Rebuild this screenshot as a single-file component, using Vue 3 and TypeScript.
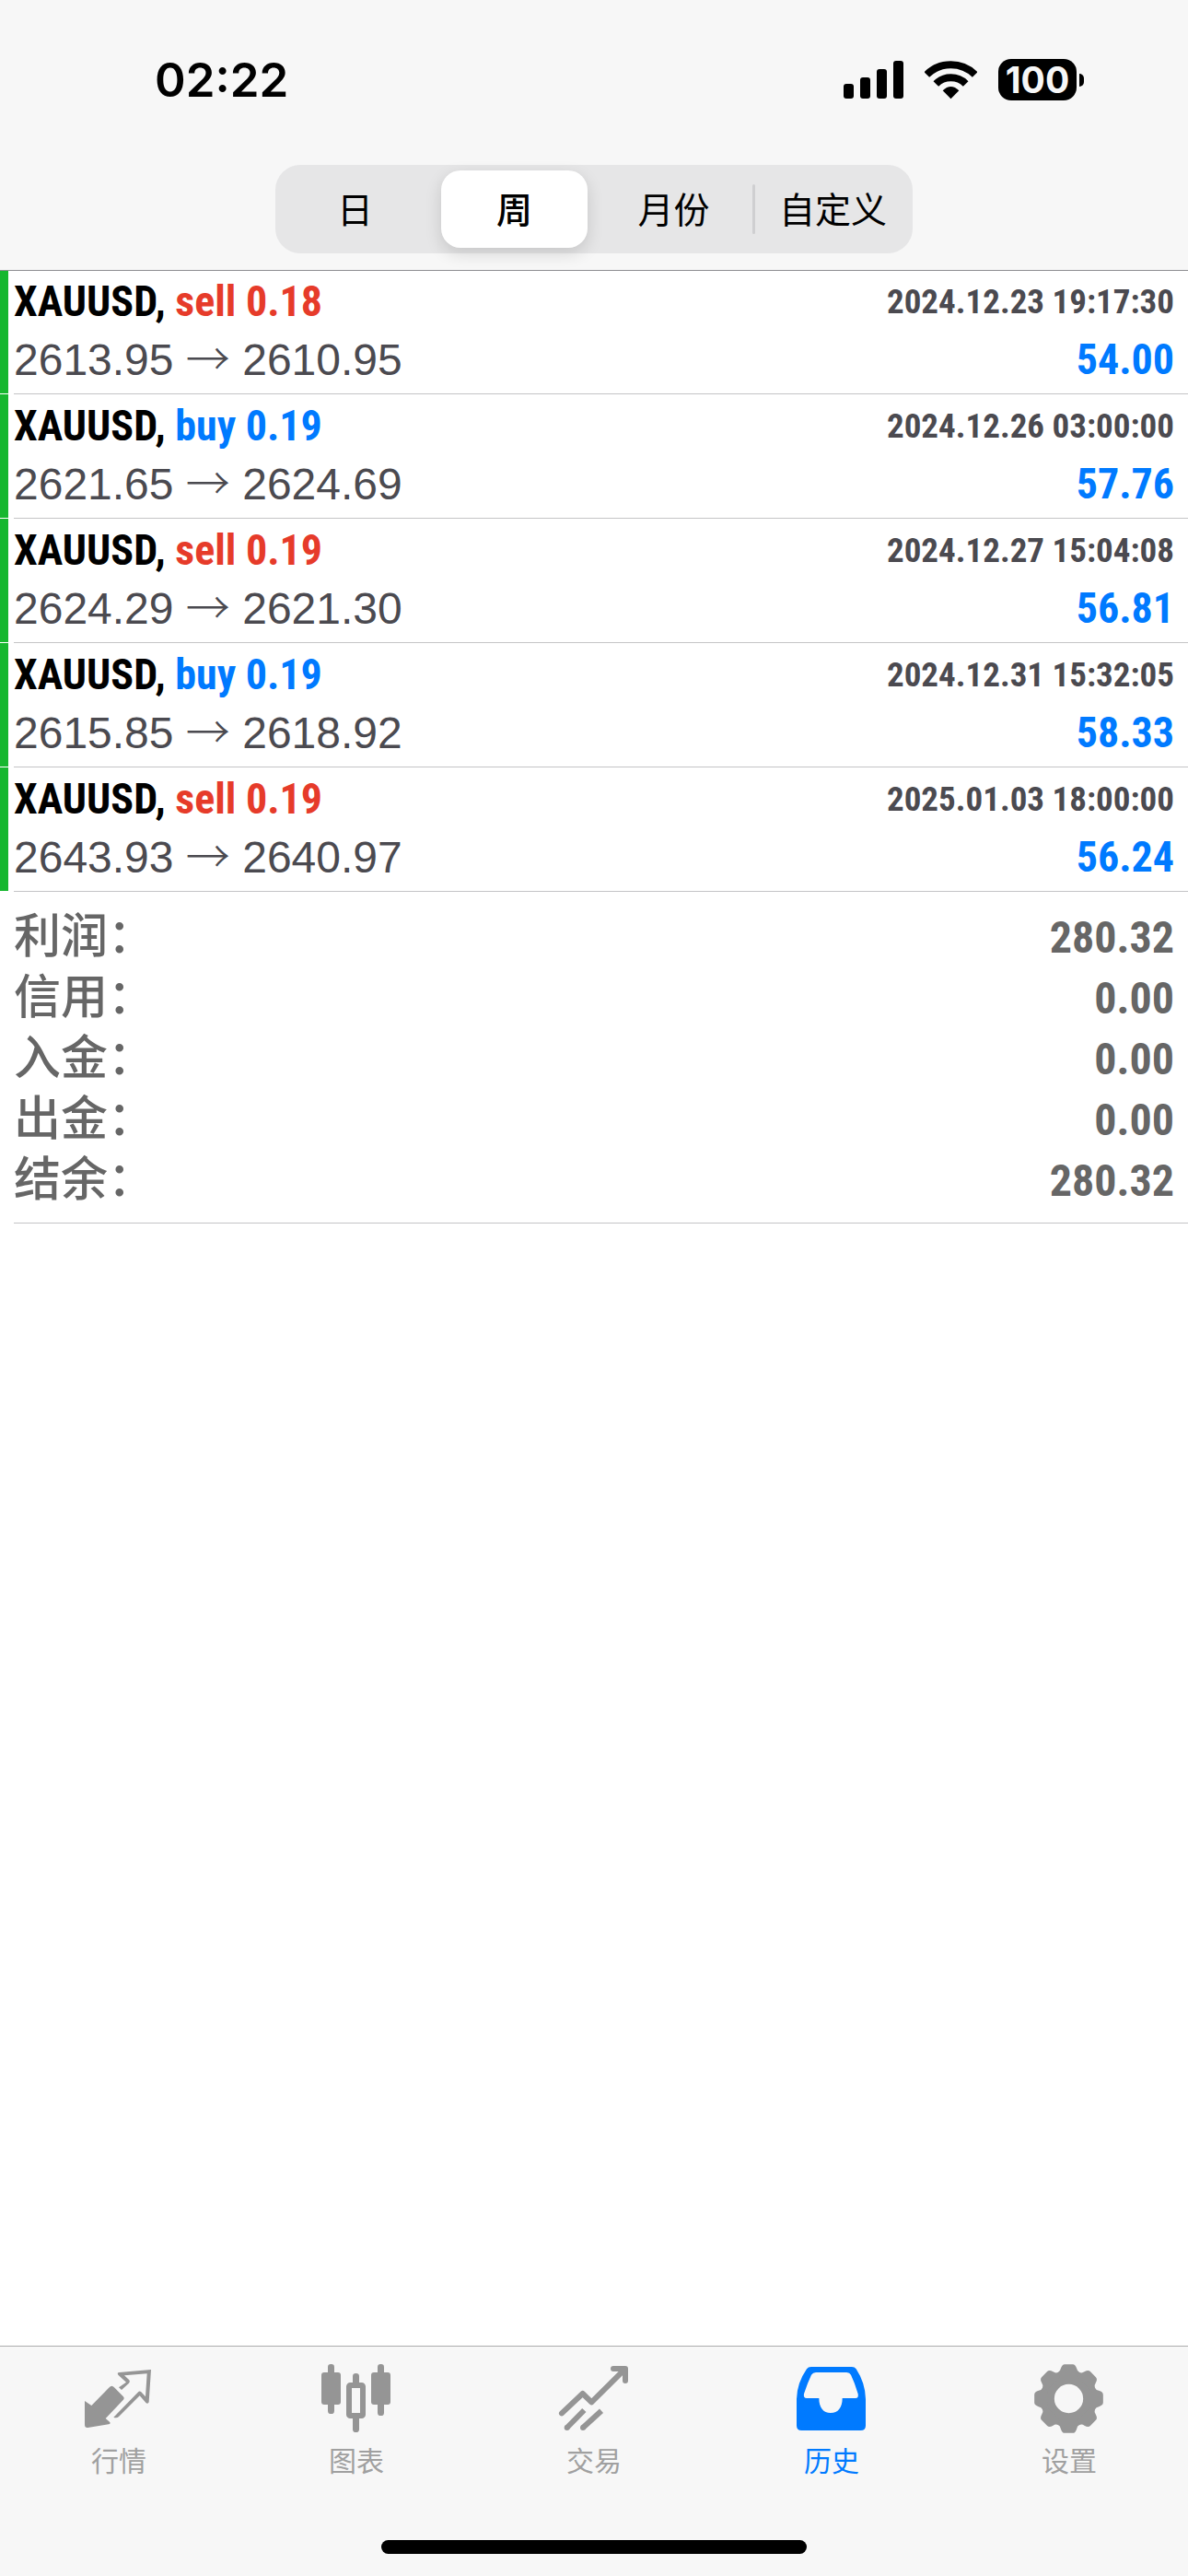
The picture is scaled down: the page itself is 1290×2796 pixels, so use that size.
<script setup lang="ts">
import { ref } from 'vue'

interface Deal {
  symbol: string
  side: 'buy' | 'sell'
  volume: string
  open: string
  close: string
  time: string
  profit: string
}

const periods = ['日', '周', '月份', '自定义']
const period = ref('周')

const deals: Deal[] = [
  { symbol: 'XAUUSD', side: 'sell', volume: '0.18', open: '2613.95', close: '2610.95', time: '2024.12.23 19:17:30', profit: '54.00' },
  { symbol: 'XAUUSD', side: 'buy', volume: '0.19', open: '2621.65', close: '2624.69', time: '2024.12.26 03:00:00', profit: '57.76' },
  { symbol: 'XAUUSD', side: 'sell', volume: '0.19', open: '2624.29', close: '2621.30', time: '2024.12.27 15:04:08', profit: '56.81' },
  { symbol: 'XAUUSD', side: 'buy', volume: '0.19', open: '2615.85', close: '2618.92', time: '2024.12.31 15:32:05', profit: '58.33' },
  { symbol: 'XAUUSD', side: 'sell', volume: '0.19', open: '2643.93', close: '2640.97', time: '2025.01.03 18:00:00', profit: '56.24' },
]

const totals = [
  { label: '利润：', value: '280.32' },
  { label: '信用：', value: '0.00' },
  { label: '入金：', value: '0.00' },
  { label: '出金：', value: '0.00' },
  { label: '结余：', value: '280.32' },
]

const gearAngles = [0, 45, 90, 135, 180, 225, 270, 315]
</script>

<template>
  <div class="app">
    <header class="header">
      <div class="status">
        <time class="clock">02:22</time>
        <div class="indicators">
          <svg class="signal" viewBox="108 72 195 135" aria-hidden="true">
            <rect x="108" y="153" width="33" height="48" rx="9" />
            <rect x="162" y="132" width="33" height="69" rx="9" />
            <rect x="216" y="105" width="33" height="96" rx="9" />
            <rect x="270" y="78" width="33" height="123" rx="9" />
          </svg>
          <svg class="wifi" viewBox="372 72 171 135" aria-hidden="true">
            <path d="M379 123A112 112 0 0 1 536 123M409 153A69 69 0 0 1 506 153" fill="none" stroke="#000" stroke-width="24" />
            <path d="M457.500 202L431 175Q457.500 149 484 175Z" />
          </svg>
          <div class="battery"><span class="level">100</span><i class="nub"></i></div>
        </div>
      </div>
      <div class="segments" role="group">
        <button
          v-for="p in periods"
          :key="p"
          type="button"
          class="segment"
          :class="{ active: p === period }"
          :aria-pressed="p === period"
          @click="period = p"
        >{{ p }}</button>
      </div>
    </header>

    <main class="content">
      <ul class="deals">
        <li v-for="d in deals" :key="d.time" class="deal">
          <div class="line">
            <span class="title">{{ d.symbol }}, <span :class="d.side">{{ d.side }} {{ d.volume }}</span></span>
            <time class="time">{{ d.time }}</time>
          </div>
          <div class="line">
            <span class="prices">{{ d.open }} <span class="arrow">→</span> {{ d.close }}</span>
            <span class="profit">{{ d.profit }}</span>
          </div>
        </li>
      </ul>
      <dl class="totals">
        <div v-for="t in totals" :key="t.label" class="total">
          <dt>{{ t.label }}</dt>
          <dd>{{ t.value }}</dd>
        </div>
      </dl>
    </main>

    <footer class="footer">
      <nav class="tabs">
        <a href="#quotes" class="tab">
          <svg class="icon" viewBox="87 99 240 240" aria-hidden="true">
            <path d="M96 228L118 243L176 184Q184 175 192 184L221 213Q227 219 221 225L164 285L177 296Q182 301 174 304L106 315Q96 316 96 306Z" />
            <path d="M207 184L231 167L205 143Q200 136 209 135L312 126L305 232Q303 238 296 235L275 211L207 279Q200 285 190 281L269 200Q275 193 280 199L294 214L299 139L225 145L241 160Q245 165 240 170L216 192Z" />
          </svg>
          <span>行情</span>
        </a>
        <a href="#charts" class="tab">
          <svg class="icon" viewBox="861 99 240 240" aria-hidden="true">
            <rect x="888" y="108" width="21" height="162" rx="10" />
            <rect x="867" y="135" width="63" height="105" rx="9" />
            <rect x="1050" y="108" width="21" height="168" rx="10" />
            <rect x="1029" y="135" width="63" height="105" rx="9" />
            <path d="M969 172V148Q969 138 979.500 138Q990 138 990 148V172ZM969 282V320Q969 330 979.500 330Q990 330 990 320V282Z" />
            <rect x="957" y="177" width="45" height="99" rx="4" fill="none" stroke="currentColor" stroke-width="18" />
          </svg>
          <span>图表</span>
        </a>
        <a href="#trade" class="tab">
          <svg class="icon" viewBox="135 99 240 240" aria-hidden="true">
            <g fill="none" stroke="currentColor" stroke-width="18">
              <path d="M150 268L218 204L247 232L355 125M318 123H357V162" stroke-linecap="round" stroke-linejoin="round" />
              <path d="M167 315L223 258M219 315L279 260" />
            </g>
            <circle cx="167" cy="315" r="9" />
            <circle cx="219" cy="315" r="9" />
          </svg>
          <span>交易</span>
        </a>
        <a href="#history" class="tab current" aria-current="page">
          <svg class="icon" viewBox="909 99 240 240" aria-hidden="true">
            <path fill-rule="evenodd" d="M962 117H1095Q1104 117 1109 124Q1139 170 1140 222V308Q1140 324 1124 324H931Q915 324 915 308V222Q916 170 948 124Q953 117 962 117ZM978 135Q968 135 963 143Q950 170 939 205Q936 219 948 219H988C988 250 1002 267 1026 267S1064 250 1064 219H1107Q1118 219 1115 205Q1105 170 1092 143Q1088 135 1078 135Z" />
          </svg>
          <span>历史</span>
        </a>
        <a href="#settings" class="tab">
          <svg class="icon" viewBox="153 99 240 240" aria-hidden="true">
            <g transform="translate(271.500 220.500)">
              <circle r="68" fill="none" stroke="currentColor" stroke-width="42" />
              <path
                v-for="a in gearAngles"
                :key="a"
                :transform="`rotate(${a})`"
                d="M-28 -68L-36 -85Q-27 -89 -26 -98Q-22 -112 -13 -112H13Q22 -112 26 -98Q27 -89 36 -85L28 -68Z"
              />
            </g>
          </svg>
          <span>设置</span>
        </a>
      </nav>
      <div class="home"></div>
    </footer>
  </div>
</template>

<style>
body {
  margin: 0;
  background: #fff;
}
</style>

<style scoped>
.app {
  display: flex;
  flex-direction: column;
  min-height: 100vh;
  font-family: "Liberation Sans", "Noto Sans CJK SC", sans-serif;
  background: #fff;
}
.header {
  position: relative;
  z-index: 1;
  display: flex;
  flex-direction: column;
  align-items: center;
  padding-bottom: 18px;
  background: #f7f7f7;
  box-shadow: 0 1px 0 #8e8e91;
}
.status {
  display: flex;
  justify-content: space-between;
  align-items: center;
  box-sizing: border-box;
  width: 100%;
  height: 179px;
  padding: 0 113px 6px 168px;
}
.clock {
  font: 600 51px/64px Inter, sans-serif;
}
.indicators {
  display: flex;
  gap: 23px;
}
.signal {
  width: 65px;
  height: 45px;
}
.wifi {
  width: 57px;
  height: 45px;
}
.battery {
  display: flex;
  align-items: center;
  gap: 3px;
}
.level {
  width: 85px;
  border-radius: 14px;
  background: #000;
  color: #f7f7f7;
  font: 700 39px/45px Inter, sans-serif;
  text-align: center;
}
.nub {
  width: 5px;
  height: 14px;
  border-radius: 0 5px 5px 0;
  background: #000;
}
.segments {
  display: grid;
  grid-template-columns: repeat(4, 173px);
  box-sizing: border-box;
  height: 96px;
  padding: 6px 0;
  border-radius: 27px;
  background: #e6e6e7;
}
.segment {
  position: relative;
  margin: 0 7px;
  padding: 0 0 4px;
  border: 0;
  border-radius: 21px;
  background: none;
  color: #000;
  font: 400 39px/80px "Noto Sans CJK SC", sans-serif;
  white-space: nowrap;
}
.segment.active {
  background: #fff;
  font-weight: 500;
  box-shadow: 0 6px 18px rgba(0, 0, 0, 0.14);
}
.segment:last-child::before {
  content: "";
  position: absolute;
  left: -8px;
  top: 15px;
  width: 3px;
  height: 54px;
  border-radius: 2px;
  background: #cfcfd1;
}
.content {
  flex: 1;
}
.deals {
  margin: 0;
  padding: 0;
  list-style: none;
}
.deal {
  display: grid;
  padding: 3px 15px 6px;
  background:
    linear-gradient(#16b72e, #16b72e) 0 0 / 9px calc(100% - 1px) no-repeat,
    linear-gradient(#c4c4c6, #c4c4c6) 15px 100% / 100% 1px no-repeat;
}
.line {
  display: flex;
  justify-content: space-between;
  align-items: center;
  height: 63px;
  line-height: 63px;
  font-size: 48px;
  white-space: nowrap;
}
.title,
.time,
.profit,
.total dd {
  font-family: "Roboto Condensed", "Liberation Sans Narrow", "Liberation Sans", sans-serif;
  font-weight: 700;
}
.title,
.profit {
  font-size: 46px;
}
.sell {
  color: #e63b2a;
}
.buy,
.profit {
  color: #007aff;
}
.time {
  color: #4b4a50;
  font-size: 37px;
}
.prices {
  color: #4b4a50;
}
.arrow {
  font-family: "Noto Sans CJK SC", sans-serif;
  font-weight: 300;
  line-height: 1;
}
.totals {
  margin: 0 0 0 15px;
  padding: 16px 15px 13px 0;
  border-bottom: 1px solid #c4c4c6;
}
.total {
  display: flex;
  justify-content: space-between;
  align-items: baseline;
  height: 66px;
  color: #666;
  line-height: 66px;
}
.total dt {
  font-size: 51px;
  font-weight: 500;
}
.total dd {
  margin: 0;
  font-size: 48px;
}
.footer {
  display: flex;
  flex-direction: column;
  align-items: center;
  padding-bottom: 24px;
  border-top: 1px solid #acacae;
  background: #f7f7f7;
}
.tabs {
  display: flex;
  width: 100%;
  height: 210px;
}
.tab {
  flex: 1;
  display: flex;
  flex-direction: column;
  align-items: center;
  padding-top: 16px;
  color: #959595;
  font: 400 30px/44px "Noto Sans CJK SC", sans-serif;
  text-decoration: none;
}
.tab span {
  margin-top: 4px;
  color: #a0a0a0;
}
.tab.current,
.tab.current span {
  color: #007aff;
}
.icon {
  width: 80px;
  height: 80px;
  fill: currentColor;
}
.home {
  width: 462px;
  height: 15px;
  border-radius: 8px;
  background: #000;
}
</style>
